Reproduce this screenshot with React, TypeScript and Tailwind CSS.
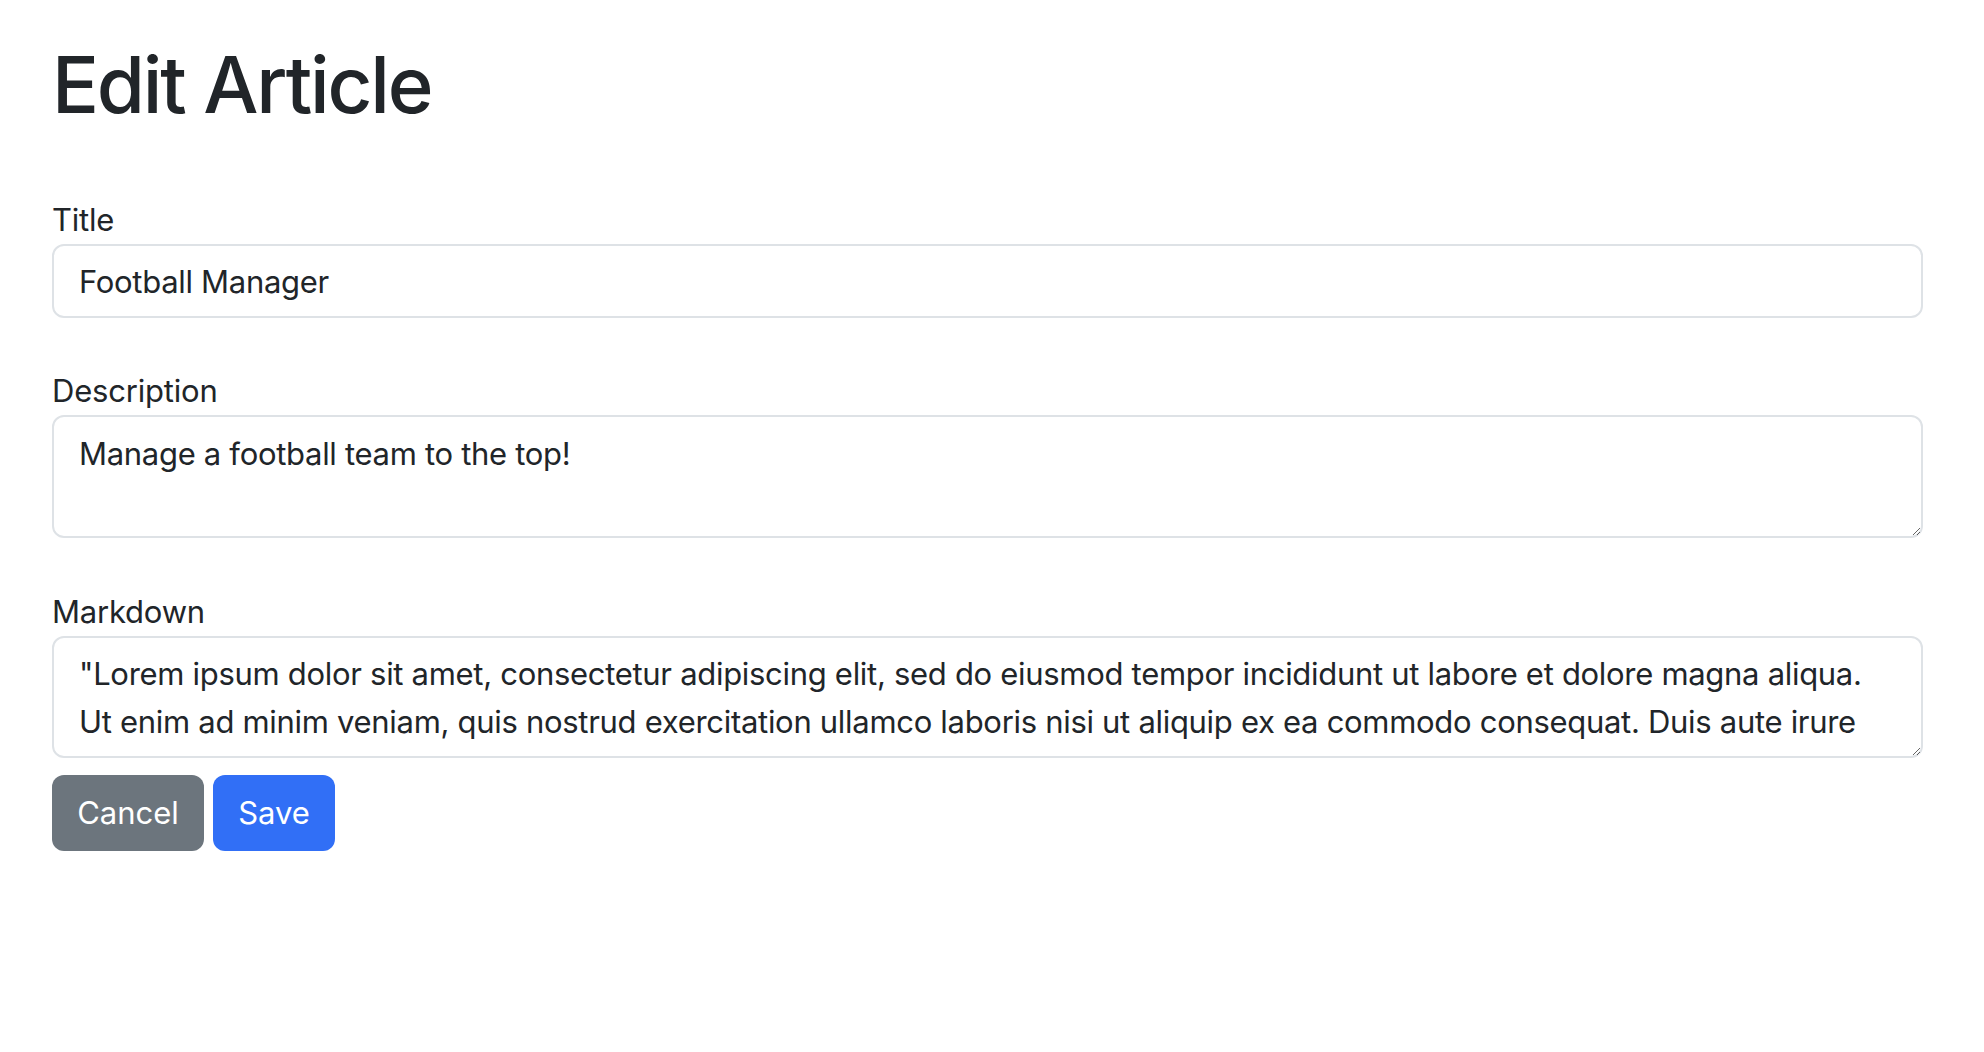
import React from "react";

const lorem =
  '"Lorem ipsum dolor sit amet, consectetur adipiscing elit, sed do eiusmod tempor incididunt ut labore et dolore magna aliqua. Ut enim ad minim veniam, quis nostrud exercitation ullamco laboris nisi ut aliquip ex ea commodo consequat. Duis aute irure dolor in reprehenderit in voluptate velit esse cillum dolore eu fugiat nulla pariatur. Excepteur sint occaecat cupidatat non proident, sunt in culpa qui officia deserunt mollit anim id est laborum."';

export default function App() {
  return (
    <div className="min-h-screen bg-white pl-[52px] pr-[61px] pt-[38px] font-['Inter','Noto_Sans',sans-serif] text-[#212529]">
      <h1 className="text-[78px] leading-[94px] font-medium tracking-[-2.2px]">Edit Article</h1>
      <form className="mt-[66px] flex flex-col" onSubmit={(e) => e.preventDefault()}>
        <div>
          <label htmlFor="title" className="block text-[31px] leading-[44px] mb-[2px] tracking-[-0.2px]">
            Title
          </label>
          <input
            id="title"
            type="text"
            defaultValue="Football Manager"
            className="block w-full h-[74px] border-2 border-[#dee2e6] rounded-[12px] px-[25px] text-[31px] tracking-[-0.3px] text-[#212529] outline-none"
          />
        </div>
        <div className="mt-[51px]">
          <label htmlFor="description" className="block text-[31px] leading-[44px] mb-[2px] tracking-[-0.2px]">
            Description
          </label>
          <textarea
            id="description"
            rows={2}
            defaultValue="Manage a football team to the top!"
            className="block w-full h-[123px] border-2 border-[#dee2e6] rounded-[12px] px-[25px] pt-[13px] text-[31px] leading-[48px] tracking-[-0.3px] text-[#212529] outline-none overflow-hidden"
          />
        </div>
        <div className="mt-[52px]">
          <label htmlFor="markdown" className="block text-[31px] leading-[44px] mb-[2px] tracking-[-0.2px]">
            Markdown
          </label>
          <textarea
            id="markdown"
            rows={2}
            defaultValue={lorem}
            className="block w-full h-[122px] border-2 border-[#dee2e6] rounded-[12px] px-[25px] pt-[12px] text-[31px] leading-[48px] tracking-[-0.3px] text-[#212529] outline-none overflow-hidden"
          />
        </div>
        <div className="mt-[17px] flex gap-[9px]">
          <button
            type="button"
            className="h-[76px] w-[152px] rounded-[12px] bg-[#6c757d] text-white text-[31px]"
          >
            Cancel
          </button>
          <button
            type="submit"
            className="h-[76px] w-[122px] rounded-[12px] bg-[#316ff6] text-white text-[31px]"
          >
            Save
          </button>
        </div>
      </form>
    </div>
  );
}
